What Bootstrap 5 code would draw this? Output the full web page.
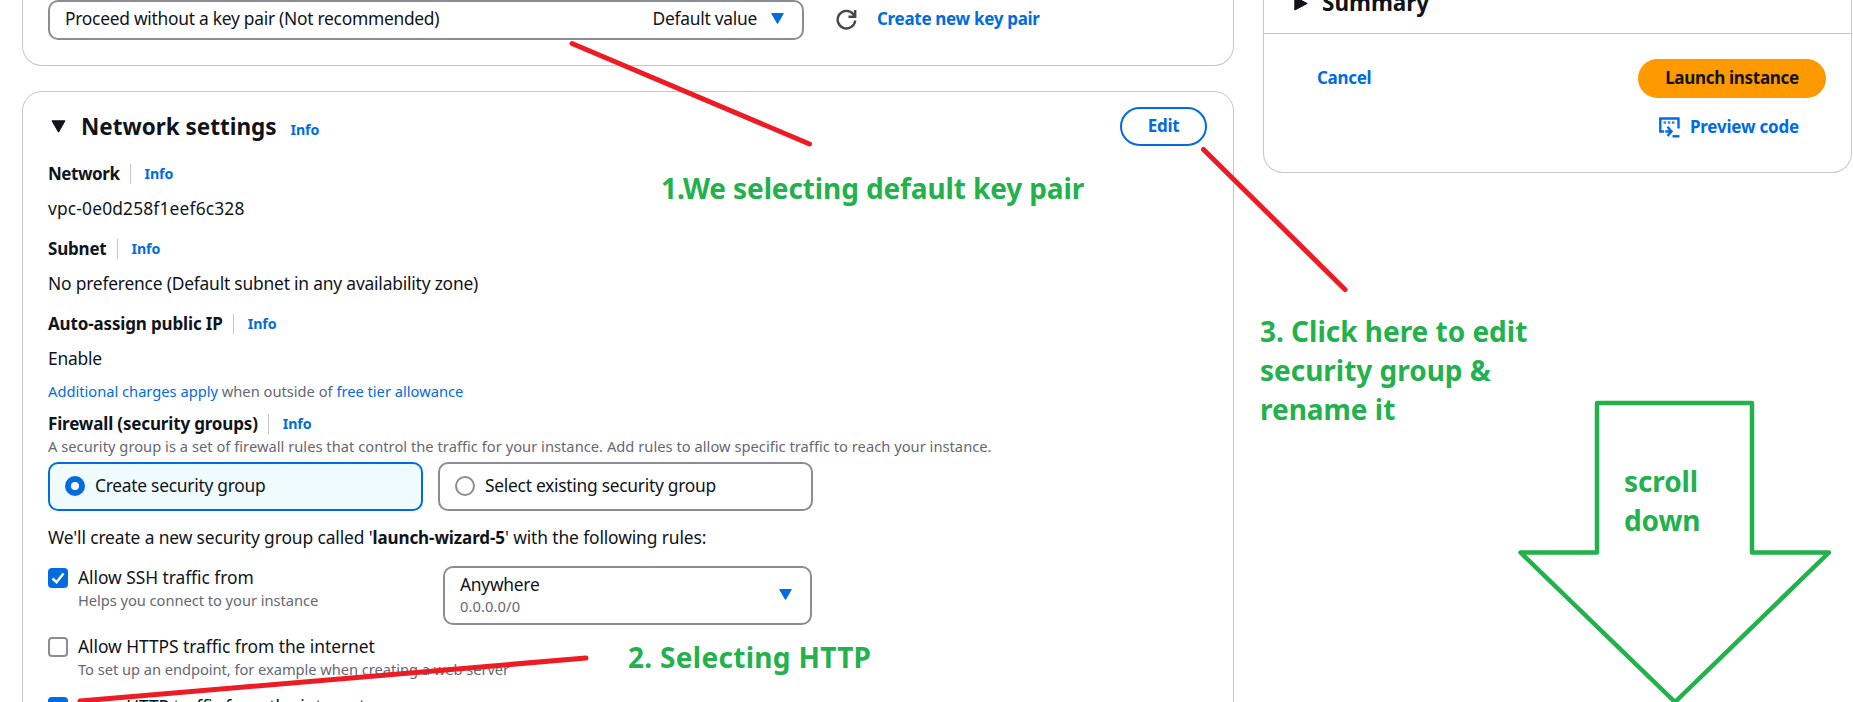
<!DOCTYPE html>
<html lang="en">
<head>
<meta charset="utf-8">
<title>Launch an instance</title>
<link href="https://cdn.jsdelivr.net/npm/bootstrap@5.3.0/dist/css/bootstrap.min.css" rel="stylesheet">
<style>
  body { font: 400 17.4px/25px "Noto Sans", "Open Sans", sans-serif; letter-spacing: -.27px; color: #0f141a; background: #fff; overflow: hidden; }
  .stage { height: 702px; }
  .main-col { width: 1212px; margin-left: 22px; flex: none; }
  .side-col { width: 589px; margin-left: 29px; flex: none; }
  .panel { border: 1px solid #c6c6cd; border-radius: 20px; background: #fff; padding: 0 25px; }
  .panel-cut { border-top: 0; border-radius: 0 0 20px 20px; }
  .keypair { height: 66px; }
  .network { margin-top: 25px; height: 660px; }
  .blue { color: #006ce0; text-decoration: none; }
  .semi { font-size: 17px; font-weight: 700; letter-spacing: -.3px; }
  .hint { font-size: 14.7px; line-height: 20px; color: #656871; letter-spacing: .02px; }
  .charges { letter-spacing: -.01px; }
  .rule-text .hint { letter-spacing: -.05px; }
  .info { font-size: 14.2px; font-weight: 700; color: #006ce0; text-decoration: none; letter-spacing: -.1px; }
  .box { border: 2px solid #8c8c94; border-radius: 10px; background: #fff; }
  .picker { width: 756px; height: 40px; padding: 0 18px 3px 15px; }
  .head { height: 39px; margin-top: 15px; }
  .title { font-size: 22.5px; font-weight: 700; line-height: 30px; margin-left: 15px; letter-spacing: -.02px; }
  .edit { width: 87px; height: 39px; border: 2px solid #006ce0; border-radius: 20px; margin-right: 1px; padding-bottom: 2px; }
  .field { height: 25px; }
  .field .info { border-left: 1px solid #c6c6cd; height: 20px; line-height: 20px; margin-left: 10px; padding-left: 14px; }
  .field strong, .rules strong { font-size: 17px; font-weight: 700; letter-spacing: -.2px; }
  .field:first-of-type strong { letter-spacing: -.3px; }
  .value { margin-top: 10px; height: 25px; letter-spacing: -.2px; }
  .vpc { letter-spacing: .15px; }
  .rules { letter-spacing: -.12px; }
  .rules strong { letter-spacing: -.1px; }
  .tile { width: 375px; height: 49px; padding-left: 15px; padding-bottom: 2px; gap: 10px; }
  .tile.on { border-color: #006ce0; background: #f0fbff; }
  .dot { width: 20px; height: 20px; border: 2px solid #8c8c94; border-radius: 50%; background: #fff; }
  .on .dot { border: 6px solid #006ce0; }
  .tick { width: 20px; height: 20px; border: 2px solid #8c8c94; border-radius: 4px; margin-top: 3px; flex: none; }
  .tick.set { border: 0; background: #006ce0; }
  .tick svg { display: block; }
  .source { width: 369px; height: 59px; padding: 0 18px 2px 15px; margin-top: 1px; }
  .source-name { line-height: 23px; }
  .source .hint { line-height: 20px; letter-spacing: .1px; }
  .rule-text { margin-left: 10px; width: 365px; white-space: nowrap; letter-spacing: -.05px; }
  .summary-panel { height: 173px; padding: 0; }
  .summary-head { height: 34px; border-bottom: 1px solid #c6c6cd; padding-left: 30px; }
  .summary-head .title { margin: -12px 0 0 14px; }
  .launch { width: 188px; height: 39px; border-radius: 20px; background: #ff9900; padding-bottom: 2px; }
  .note { position: absolute; font: 700 28px/39px "Noto Sans", sans-serif; color: #22b14c; white-space: pre; }
  .note-key { left: 661px; top: 169px; letter-spacing: -.12px; }
  .note-http { left: 628px; top: 638px; letter-spacing: .3px; }
  .note-edit { left: 1260px; top: 312px; letter-spacing: -.02px; }
  .note-scroll { left: 1624px; top: 462px; letter-spacing: -.1px; }
  .strokes { position: absolute; left: 0; top: 0; pointer-events: none; }
</style>
</head>
<body>
<div class="stage position-relative overflow-hidden d-flex align-items-start">
  <main class="main-col">
    <section class="panel panel-cut keypair d-flex align-items-start">
      <div class="box picker d-flex align-items-center">
        <span>Proceed without a key pair (Not recommended)</span>
        <span class="ms-auto">Default value</span>
        <svg style="margin-left:14px" width="13" height="11"><path d="M.7.5H12.3L6.5 10.5Z" fill="#006ce0" stroke="#006ce0" stroke-linejoin="round"/></svg>
      </div>
      <svg style="margin:9px 20px 0 32px" width="21" height="22" viewBox="0 0 21 22" fill="none" stroke="#424650" stroke-width="2.4"><path d="M19.200 11.500A8.800 8.800 0 1 1 17.200 5L19 7.500M19.200 1V7.700H12.500"/></svg>
      <a class="blue semi" style="margin-top:6px" href="#">Create new key pair</a>
    </section>

    <section class="panel network">
      <div class="head d-flex align-items-center">
        <svg style="margin-left:3px" width="15" height="13"><path d="M1 .8H14L7.500 12.200Z" fill="#0f141a" stroke="#0f141a" stroke-linejoin="round"/></svg>
        <span class="title">Network settings</span>
        <a class="info" style="margin:6px 0 0 14px" href="#">Info</a>
        <a class="edit blue semi d-flex align-items-center justify-content-center ms-auto" href="#">Edit</a>
      </div>

      <div class="field d-flex align-items-center" style="margin-top:15px"><strong style="letter-spacing:-.45px">Network</strong><a class="info" href="#">Info</a></div>
      <div class="value vpc">vpc-0e0d258f1eef6c328</div>
      <div class="field d-flex align-items-center" style="margin-top:15px"><strong>Subnet</strong><a class="info" href="#">Info</a></div>
      <div class="value">No preference (Default subnet in any availability zone)</div>
      <div class="field d-flex align-items-center" style="margin-top:15px"><strong style="letter-spacing:-.15px">Auto-assign public IP</strong><a class="info" href="#">Info</a></div>
      <div class="value">Enable</div>
      <div class="hint charges" style="margin-top:10px"><a class="blue" href="#">Additional charges apply</a> when outside of <a class="blue" href="#">free tier allowance</a></div>
      <div class="field d-flex align-items-center" style="margin-top:10px"><strong style="letter-spacing:-.16px">Firewall (security groups)</strong><a class="info" href="#">Info</a></div>
      <div class="hint">A security group is a set of firewall rules that control the traffic for your instance. Add rules to allow specific traffic to reach your instance.</div>

      <div class="d-flex" style="gap:15px;margin-top:6px">
        <div class="box tile on d-flex align-items-center"><span class="dot"></span>Create security group</div>
        <div class="box tile d-flex align-items-center"><span class="dot"></span>Select existing security group</div>
      </div>
      <div class="rules" style="margin-top:14px">We'll create a new security group called '<strong>launch-wizard-5</strong>' with the following rules:</div>

      <div class="d-flex align-items-start" style="margin-top:15px;height:69px">
        <span class="tick set"><svg width="20" height="20" fill="none" stroke="#fff" stroke-width="2.4"><path d="M4.500 10.500 8.500 14.200 15.500 5.500"/></svg></span>
        <div class="rule-text">Allow SSH traffic from<div class="hint">Helps you connect to your instance</div></div>
        <div class="box source d-flex align-items-center">
          <div><div class="source-name">Anywhere</div><div class="hint">0.0.0.0/0</div></div>
          <svg class="ms-auto" width="13" height="11"><path d="M.7.5H12.3L6.5 10.5Z" fill="#006ce0" stroke="#006ce0" stroke-linejoin="round"/></svg>
        </div>
      </div>
      <div class="d-flex align-items-start" style="height:60px">
        <span class="tick"></span>
        <div class="rule-text">Allow HTTPS traffic from the internet<div class="hint">To set up an endpoint, for example when creating a web server</div></div>
      </div>
      <div class="d-flex align-items-start">
        <span class="tick set"><svg width="20" height="20" fill="none" stroke="#fff" stroke-width="2.4"><path d="M4.500 10.500 8.500 14.200 15.500 5.500"/></svg></span>
        <div class="rule-text">Allow HTTP traffic from the internet</div>
      </div>
    </section>
  </main>

  <aside class="side-col">
    <section class="panel panel-cut summary-panel">
      <div class="summary-head d-flex align-items-start">
        <svg width="14" height="12" viewBox="0 4 14 12"><path d="M.8 1V14L13.200 7.500Z" fill="#0f141a" stroke="#0f141a" stroke-linejoin="round"/></svg>
        <span class="title">Summary</span>
      </div>
      <div class="d-flex align-items-center justify-content-between" style="margin:25px 25px 0 53px">
        <a class="blue semi" style="margin-top:-2px" href="#">Cancel</a>
        <a class="launch semi text-reset text-decoration-none d-flex align-items-center justify-content-center" href="#">Launch instance</a>
      </div>
      <a class="blue semi d-flex align-items-start justify-content-end" style="margin:16px 52px 0 0;letter-spacing:-.2px" href="#">
        <svg style="margin:3px 10px 0 0" width="21" height="21" viewBox="0 0 21 21" fill="none" stroke="#006ce0" stroke-width="2.4"><path d="M5.200 14.500H1.300V1.500H19.500V11.500M6.300 14.500H12M8.500 9.800 12.500 14.500 8.500 19"/><path d="M13.500 19.300H20.500"/><path d="M4.500 5.500H16" stroke-dasharray="2.600 1.600" stroke-opacity=".8"/></svg>
        Preview code</a>
    </section>
  </aside>

  <svg class="strokes" width="1853" height="702" fill="none" stroke-linejoin="round" stroke-linecap="round">
    <g stroke="#ed1c24" stroke-width="5">
      <path d="M572 43.500 809.500 144"/>
      <path d="M1203.500 149.500 1345 289.500"/>
      <path d="M80 701 586 658"/>
    </g>
    <path d="M1597 403H1752V552.500H1829L1675 702 1520.500 552.500H1597Z" stroke="#22b14c" stroke-width="4.500"/>
  </svg>
  <div class="note note-key">1.We selecting default key pair</div>
  <div class="note note-http">2. Selecting HTTP</div>
  <div class="note note-edit">3. Click here to edit
security group &amp;
rename it</div>
  <div class="note note-scroll">scroll
down</div>
</div>
<script src="https://cdn.jsdelivr.net/npm/bootstrap@5.3.0/dist/js/bootstrap.bundle.min.js"></script>
</body>
</html>
